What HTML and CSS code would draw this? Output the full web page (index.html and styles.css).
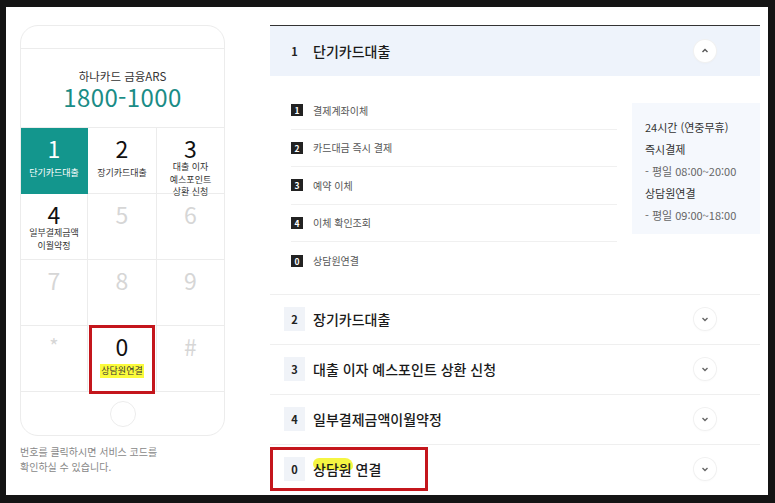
FILE: index.html
```html
<!DOCTYPE html>
<html lang="ko">
<head>
<meta charset="utf-8">
<link rel="stylesheet" href="styles.css">
</head>
<body>
<div class="frame">
  <div class="left">
    <div class="phone">
      <div class="phone-top"></div>
      <div class="phone-head">
        <div class="ars-title">하나카드 금융ARS</div>
        <div class="ars-num">1800-1000</div>
      </div>
      <div class="keypad">
        <div class="key active"><span class="kn">1</span><span class="kl">단기카드대출</span></div>
        <div class="key"><span class="kn">2</span><span class="kl">장기카드대출</span></div>
        <div class="key"><span class="kn">3</span><span class="kl">대출 이자<br>예스포인트<br>상환 신청</span></div>
        <div class="key"><span class="kn">4</span><span class="kl">일부결제금액<br>이월약정</span></div>
        <div class="key off"><span class="kn">5</span></div>
        <div class="key off"><span class="kn">6</span></div>
        <div class="key off"><span class="kn">7</span></div>
        <div class="key off"><span class="kn">8</span></div>
        <div class="key off"><span class="kn">9</span></div>
        <div class="key off"><span class="kn star">*</span></div>
        <div class="key marked"><span class="kn">0</span><span class="kl"><span class="hl">상담원연결</span></span></div>
        <div class="key off"><span class="kn">#</span></div>
      </div>
      <div class="phone-bottom"><div class="home"></div></div>
    </div>
    <p class="caption">번호를 클릭하시면 서비스 코드를<br>확인하실 수 있습니다.</p>
  </div>

  <div class="right">
    <div class="acc open">
      <div class="acc-head">
        <span class="badge">1</span>
        <span class="acc-title">단기카드대출</span>
        <span class="chev"><svg viewBox="0 0 20 20" width="20" height="20"><polyline points="7.5,11 10,8.5 12.5,11" fill="none" stroke="#555" stroke-width="1.4"/></svg></span>
      </div>
      <div class="acc-body">
        <ul class="sub">
          <li><span class="sq">1</span>결제계좌이체</li>
          <li><span class="sq">2</span>카드대금 즉시 결제</li>
          <li><span class="sq">3</span>예약 이체</li>
          <li><span class="sq">4</span>이체 확인조회</li>
          <li><span class="sq">0</span>상담원연결</li>
        </ul>
        <div class="info">
          <div class="it">24시간 (연중무휴)</div>
          <div class="it">즉시결제</div>
          <div class="it dim">- 평일 08:00~20:00</div>
          <div class="it">상담원연결</div>
          <div class="it dim">- 평일 09:00~18:00</div>
        </div>
      </div>
    </div>
    <div class="acc">
      <div class="acc-head">
        <span class="badge">2</span>
        <span class="acc-title">장기카드대출</span>
        <span class="chev"><svg viewBox="0 0 20 20" width="20" height="20"><polyline points="7.5,9 10,11.5 12.5,9" fill="none" stroke="#666" stroke-width="1.4"/></svg></span>
      </div>
    </div>
    <div class="acc">
      <div class="acc-head">
        <span class="badge">3</span>
        <span class="acc-title">대출 이자 예스포인트 상환 신청</span>
        <span class="chev"><svg viewBox="0 0 20 20" width="20" height="20"><polyline points="7.5,9 10,11.5 12.5,9" fill="none" stroke="#666" stroke-width="1.4"/></svg></span>
      </div>
    </div>
    <div class="acc">
      <div class="acc-head">
        <span class="badge">4</span>
        <span class="acc-title">일부결제금액이월약정</span>
        <span class="chev"><svg viewBox="0 0 20 20" width="20" height="20"><polyline points="7.5,9 10,11.5 12.5,9" fill="none" stroke="#666" stroke-width="1.4"/></svg></span>
      </div>
    </div>
    <div class="acc marked-row">
      <div class="acc-head">
        <span class="badge">0</span>
        <span class="acc-title"><span class="marker">상담원</span> 연결</span>
        <span class="chev"><svg viewBox="0 0 20 20" width="20" height="20"><polyline points="7.5,9 10,11.5 12.5,9" fill="none" stroke="#666" stroke-width="1.4"/></svg></span>
      </div>
    </div>
  </div>
</div>
</body>
</html>
```

FILE: styles.css
```css
*, *::before, *::after { box-sizing: border-box; }
html, body { margin: 0; padding: 0; }
body {
  background: #141414;
  width: 775px;
  height: 503px;
  overflow: hidden;
  font-family: "Noto Sans CJK KR", "Noto Sans", sans-serif;
  color: #222;
}
.frame {
  margin: 7px 0 0 6px;
  width: 762px;
  height: 488px;
  background: #fff;
  display: flex;
  gap: 45px;
  padding: 18px 8px 0 14px;
  overflow: hidden;
}
.left { width: 205px; flex: none; }
.phone {
  border: 1px solid #ececec;
  border-radius: 18px;
  overflow: hidden;
}
.phone-top { height: 23px; border-bottom: 1px solid #ececec; }
.phone-head {
  height: 79px;
  border-bottom: 1px solid #ececec;
  display: flex;
  flex-direction: column;
  align-items: center;
  padding-top: 20px;
}
.ars-title { font-size: 11.5px; line-height: 14px; color: #333; }
.ars-num { font-size: 24px; line-height: 28px; color: #1a8c86; letter-spacing: 0.4px; }
.keypad {
  display: grid;
  grid-template-columns: 67px 69px 1fr;
  grid-auto-rows: 66px;
}
.key {
  display: flex;
  flex-direction: column;
  align-items: center;
  padding: 7px 0 8px;
  border-right: 1px solid #ececec;
  border-bottom: 1px solid #ececec;
  position: relative;
}
.key:nth-child(3n) { border-right: none; }
.kn { font-size: 23px; line-height: 26px; color: #111; flex: none; }
.kl {
  flex: 1;
  display: flex;
  align-items: center;
  justify-content: center;
  font-size: 9px;
  line-height: 12.5px;
  color: #333;
  text-align: center;
}
.key.active { background: #13968d; border-color: #13968d; }
.key.active .kn, .key.active .kl { color: #fff; }
.key.off .kn { color: #d6d6d6; }
.key.off .kn.star { font-size: 20px; }
.hl { background: #fbfb3c; padding: 1px 1px; color: #333; }
.key.marked::after {
  content: "";
  position: absolute;
  left: 1px;
  top: -1px;
  width: 66px;
  height: 69px;
  border: 3px solid #c4161c;
}
.phone-bottom {
  height: 43px;
  display: flex;
  align-items: center;
  justify-content: center;
}
.home {
  width: 26px;
  height: 26px;
  border: 1px solid #ececec;
  border-radius: 50%;
}
.caption {
  margin: 8px 0 0;
  font-size: 10px;
  line-height: 15px;
  color: #888;
}

.right { width: 490px; flex: none; border-top: 1px solid #333; }
.acc { border-top: 1px solid #efefef; }
.acc.open { border-top: none; }
.acc-head {
  height: 49px;
  display: flex;
  align-items: center;
  padding: 0 44px 0 14px;
  position: relative;
}
.open .acc-head { height: 50px; background: #eef3fb; }
.badge {
  width: 21px;
  height: 24px;
  background: #f0f3f8;
  display: flex;
  align-items: center;
  justify-content: center;
  font-size: 11px;
  font-weight: 600;
  color: #222;
  margin-right: 8px;
}
.open .badge { background: transparent; }
.acc-title { font-size: 14px; font-weight: 500; color: #1a1a1a; flex: 1; position: relative; z-index: 0; }
.chev {
  width: 22px;
  height: 22px;
  border-radius: 50%;
  background: #fff;
  box-shadow: 0 0 0 1px #f1f1f1, 0 1px 3px rgba(0,0,0,0.04);
  display: flex;
  align-items: center;
  justify-content: center;
}
.acc-body {
  display: flex;
  gap: 15px;
  padding: 16px 0 14px 21px;
}
.sub { list-style: none; margin: 0; padding: 0; flex: 1; }
.sub li {
  height: 37.5px;
  display: flex;
  align-items: center;
  font-size: 10px;
  color: #555;
  border-bottom: 1px solid #f0f0f0;
}
.sub li:last-child { border-bottom: none; }
.sq {
  width: 12px;
  height: 12px;
  background: #222;
  color: #fff;
  font-size: 8.5px;
  font-weight: 700;
  display: flex;
  align-items: center;
  justify-content: center;
  margin-right: 10px;
}
.info {
  width: 128px;
  flex: none;
  align-self: flex-start;
  margin-top: 11px;
  background: #f5f8fd;
  padding: 13px 0 8px 13px;
}
.it { font-size: 11px; line-height: 22px; color: #333; }
.it.dim { color: #666; }
.marker { position: relative; }
.marker::before {
  content: "";
  position: absolute;
  left: 0;
  right: -1px;
  top: -1px;
  height: 12px;
  background: #f5f542;
  border-radius: 6px 8px 4px 6px;
  z-index: -1;
}
.marked-row .acc-head::after {
  content: "";
  position: absolute;
  left: 0;
  top: 2px;
  width: 158px;
  height: 44px;
  border: 3px solid #c4161c;
}
```
